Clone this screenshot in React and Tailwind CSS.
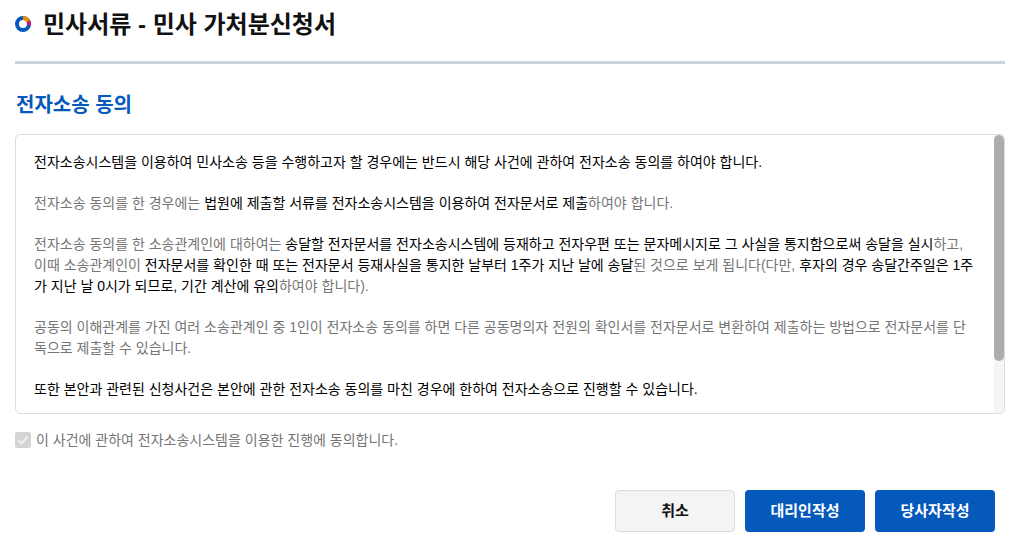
const FONT = "font-['Liberation_Sans','Noto_Sans_CJK_KR',sans-serif]";

function B({ children }) {
  return <span className="text-black">{children}</span>;
}

export default function App() {
  return (
    <div className={`${FONT} w-[1036px] h-[550px] bg-white overflow-hidden px-[15px]`}>
      <div className="w-[990px]">
        {/* Title */}
        <div className="flex items-center box-content h-[50px] pb-[11px] border-b-[3px] border-[#cbd3e0]">
          <svg width="16" height="16" viewBox="0 0 16 16" className="shrink-0 -mt-[2px]">
            <circle cx="8" cy="8" r="6" fill="none" stroke="#0559bb" strokeWidth="4" />
            <path d="M8 2A6 6 0 0 1 13.44 5.46" fill="none" stroke="#f08a00" strokeWidth="4" />
            <path d="M13.44 5.46A6 6 0 0 1 13.85 9.35" fill="none" stroke="#c2188c" strokeWidth="4" />
          </svg>
          <h1 className="ml-[12px] text-[24px] leading-[32px] font-bold text-[#111]">민사서류 - 민사 가처분신청서</h1>
        </div>

        <h2 className="mt-[27px] pl-px text-[20px] leading-[28px] font-bold text-[#0559bb]">전자소송 동의</h2>

        {/* Agreement text box */}
        <div className="relative mt-[15px] h-[280px] border border-[#dcdcdc] rounded-[5px] overflow-hidden">
          <div className="absolute right-0 top-0 bottom-0 w-[10px] bg-[#f5f5f5]">
            <div className="h-[226px] w-[10px] rounded-[5px] bg-[#adadad]" />
          </div>
          <div className="pl-[18px] pr-[28px] pt-[17px] text-[14px] leading-[21px] text-[#757575]">
            <p className="text-black">
              전자소송시스템을 이용하여 민사소송 등을 수행하고자 할 경우에는 반드시 해당 사건에 관하여 전자소송 동의를 하여야 합니다.
            </p>
            <p className="mt-[20px]">
              전자소송 동의를 한 경우에는 <B>법원에 제출할 서류를 전자소송시스템을 이용하여 전자문서로 제출</B>하여야 합니다.
            </p>
            <p className="mt-[20px]">
              전자소송 동의를 한 소송관계인에 대하여는 <B>송달할 전자문서를 전자소송시스템에 등재하고 전자우편 또는 문자메시지로 그 사실을 통지함으로써 송달을 실시</B>하고, 이때 소송관계인이 <B>전자문서를 확인한 때 또는 전자문서 등재사실을 통지한 날부터 1주가 지난 날에 송달</B>된 것으로 보게 됩니다(다만, <B>후자의 경우 송달간주일은 1주가 지난 날 0시가 되므로, 기간 계산에 유의</B>하여야 합니다).
            </p>
            <p className="mt-[20px]">
              공동의 이해관계를 가진 여러 소송관계인 중 1인이 전자소송 동의를 하면 다른 공동명의자 전원의 확인서를 전자문서로 변환하여 제출하는 방법으로 전자문서를 단독으로 제출할 수 있습니다.
            </p>
            <p className="mt-[20px] text-black">
              또한 본안과 관련된 신청사건은 본안에 관한 전자소송 동의를 마친 경우에 한하여 전자소송으로 진행할 수 있습니다.
            </p>
          </div>
        </div>

        {/* Consent checkbox */}
        <div className="flex items-center mt-[16px] h-[20px]">
          <span className="flex items-center justify-center w-[16px] h-[16px] rounded-[2px] bg-[#d4d4d4]">
            <svg width="12" height="12" viewBox="0 0 12 12">
              <path d="M1.5 6.5L4.5 9.5L10.5 2.5" fill="none" stroke="#efefef" strokeWidth="2.2" />
            </svg>
          </span>
          <span className="ml-[5px] text-[14px] text-[#757575]">이 사건에 관하여 전자소송시스템을 이용한 진행에 동의합니다.</span>
        </div>

        {/* Actions */}
        <div className="flex justify-end gap-[10px] mt-[40px] pr-[10px] text-[15px] font-bold">
          <button className="w-[120px] h-[42px] rounded-[4px] border border-[#dcdcdc] bg-[#f4f4f4] text-[#111]">취소</button>
          <button className="w-[120px] h-[42px] rounded-[4px] bg-[#0559bb] text-white">대리인작성</button>
          <button className="w-[120px] h-[42px] rounded-[4px] bg-[#0559bb] text-white">당사자작성</button>
        </div>
      </div>
    </div>
  );
}
